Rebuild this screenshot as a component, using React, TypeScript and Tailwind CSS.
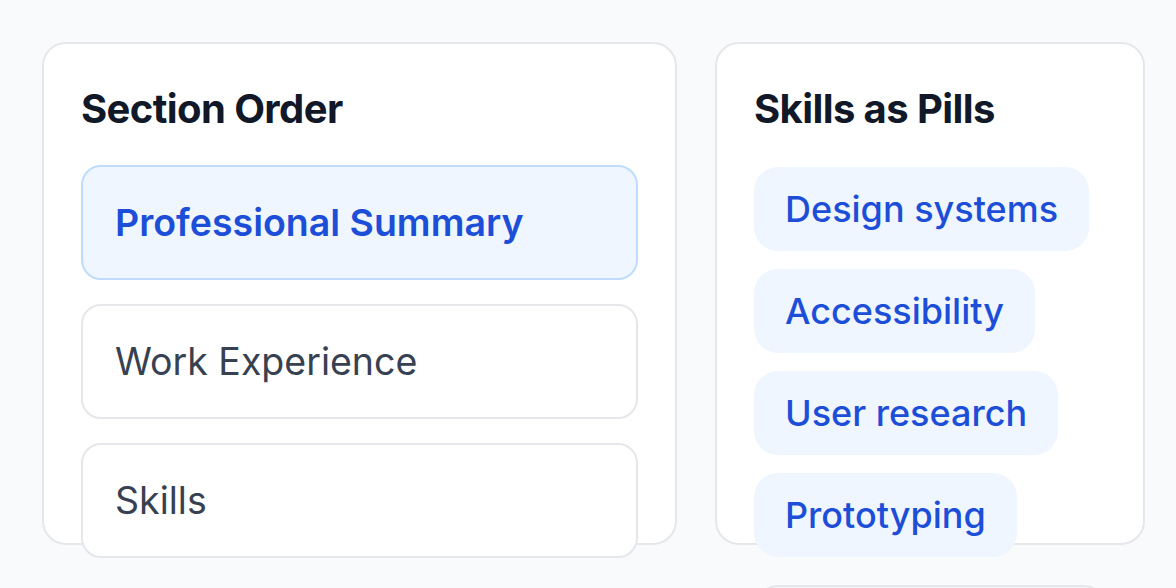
const sections = [
  { label: "Professional Summary", active: true },
  { label: "Work Experience", active: false },
  { label: "Skills", active: false },
];

const skills = ["Design systems", "Accessibility", "User research", "Prototyping"];

export default function App() {
  return (
    <div className="min-h-[588px] bg-[#f8fafc] pl-[42px] pt-[42px] font-['Inter',sans-serif] overflow-hidden">
      <div className="flex gap-[38px] items-start">
        <section className="w-[635px] h-[503px] rounded-[24px] border-2 border-[#e5e7eb] bg-white p-[37px]">
          <h2 className="text-[40px] leading-[56px] font-bold tracking-[-0.015em] text-[#111827]">Section Order</h2>
          <ul className="mt-[28px] flex flex-col gap-[24px]">
            {sections.map((s) => (
              <li
                key={s.label}
                className={
                  s.active
                    ? "h-[115px] flex items-center px-[32px] rounded-[20px] border-2 border-[#bfdbfe] bg-[#eff6ff] text-[37.5px] leading-[56px] font-semibold text-[#1d4ed8]"
                    : "h-[115px] flex items-center px-[32px] rounded-[20px] border-2 border-[#e5e7eb] bg-white text-[37.5px] leading-[56px] text-[#374151]"
                }
              >
                {s.label}
              </li>
            ))}
          </ul>
        </section>

        <section className="w-[430px] h-[503px] rounded-[24px] border-2 border-[#e5e7eb] bg-white p-[37px]">
          <h2 className="text-[40px] leading-[56px] font-bold tracking-[-0.015em] text-[#111827]">Skills as Pills</h2>
          <div className="mt-[30px] flex flex-col items-start gap-[18px]">
            {skills.map((s) => (
              <span
                key={s}
                className="h-[84px] flex items-center px-[31px] rounded-[24px] bg-[#eff6ff] text-[36px] leading-[56px] font-medium text-[#1d4ed8]"
              >
                {s}
              </span>
            ))}
            <span className="mt-[10px] h-[84px] w-[354px] rounded-[24px] border-2 border-[#e5e7eb] bg-[#f3f4f6]" />
          </div>
        </section>
      </div>
    </div>
  );
}
